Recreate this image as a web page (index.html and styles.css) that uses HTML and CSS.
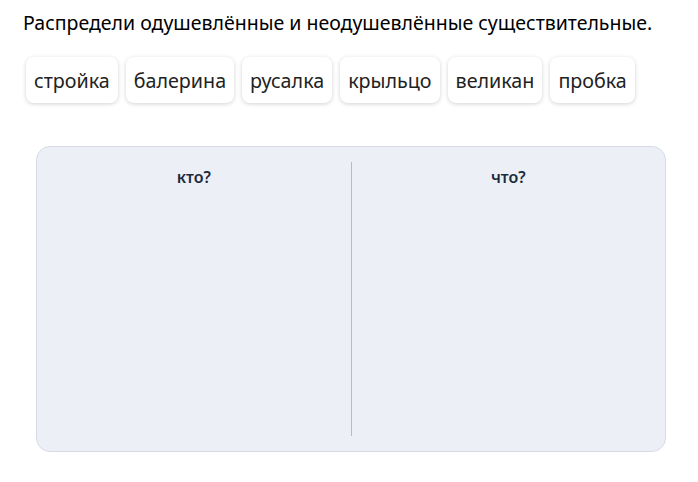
FILE: index.html
```html
<!DOCTYPE html>
<html lang="ru">
<head>
    <meta charset="UTF-8">
    <meta name="viewport" content="width=device-width, initial-scale=1.0">
    <title>Одушевлённые и неодушевлённые</title>
    <link rel="stylesheet" href="styles.css">
</head>
<body>
    <div class="task">
        <p class="question">Распредели одушевлённые и неодушевлённые существительные.</p>

        <div class="words">
            <div class="word">стройка</div>
            <div class="word">балерина</div>
            <div class="word">русалка</div>
            <div class="word">крыльцо</div>
            <div class="word">великан</div>
            <div class="word">пробка</div>
        </div>

        <div class="board">
            <div class="column">
                <div class="column-title">кто?</div>
            </div>
            <div class="divider"></div>
            <div class="column">
                <div class="column-title">что?</div>
            </div>
        </div>
    </div>
</body>
</html>
```

FILE: styles.css
```css
body {
    margin: 0;
    font-family: "Noto Sans", "Open Sans", sans-serif;
    background-color: #fff;
    color: #000;
}
.task {
    padding: 8px 0 0 23px;
}
.question {
    margin: 0;
    font-size: 19.5px;
    line-height: 30px;
}
.words {
    display: flex;
    gap: 8px;
    margin: 19px 0 0 3px;
}
.word {
    height: 46px;
    display: flex;
    align-items: center;
    padding: 0 8px;
    border-radius: 8px;
    background-color: #fff;
    color: #222;
    font-size: 19.7px;
    box-shadow: 0 1px 4px rgba(0, 0, 0, 0.18);
}
.board {
    display: flex;
    width: 630px;
    height: 306px;
    margin: 43px 0 0 13px;
    padding: 15px 0;
    box-sizing: border-box;
    background-color: #ecf0f6;
    border: 1px solid #d5dbe6;
    border-radius: 14px;
}
.column {
    flex: 1;
    display: flex;
    justify-content: center;
}
.column-title {
    margin-top: 4px;
    font-size: 16px;
    font-weight: 600;
    color: #1c2a3c;
}
.divider {
    width: 1px;
    background-color: #b3bccb;
}
```
